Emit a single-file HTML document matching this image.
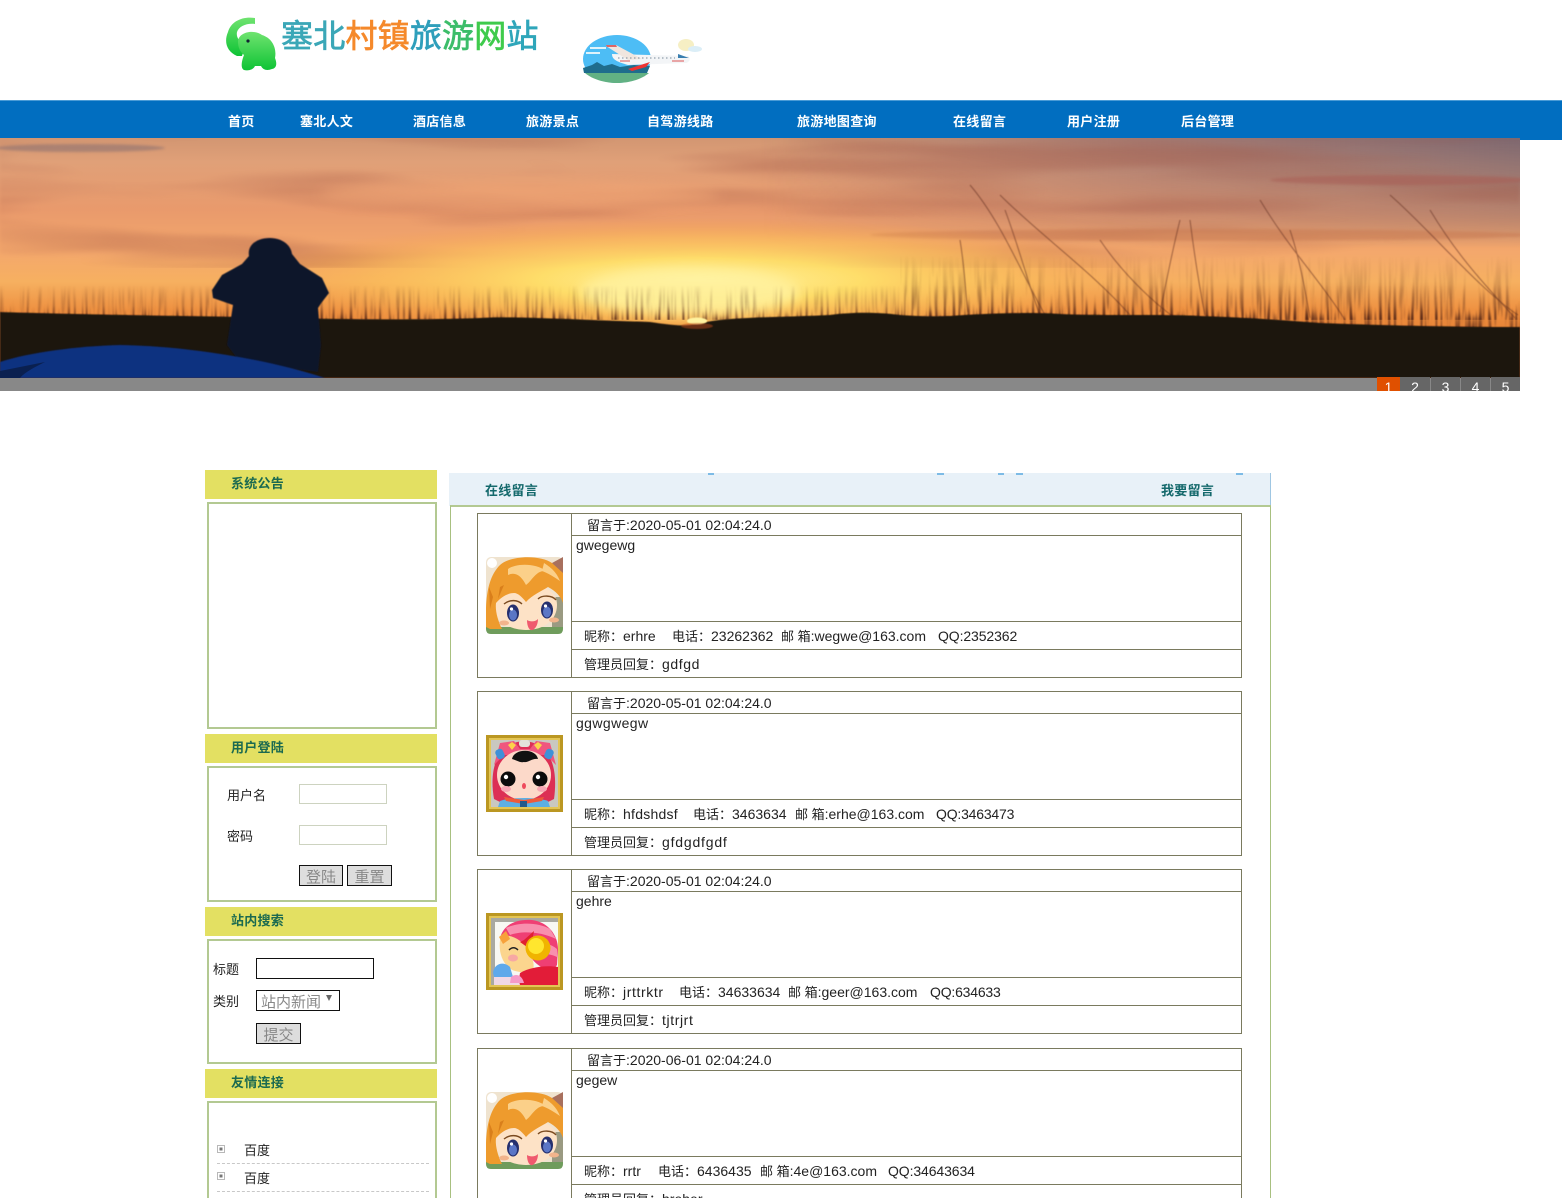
<!DOCTYPE html>
<html lang="zh"><head><meta charset="utf-8"><title>塞北村镇旅游网站</title>
<style>
html,body{margin:0;padding:0;background:#fff}
#p{position:relative;width:1562px;height:1198px;overflow:hidden;background:#fff;font-family:"Liberation Sans","Noto Sans CJK SC",sans-serif;font-size:14px;color:#222}
#p div,#p svg,#p span.t{position:absolute}
.t{line-height:20px;height:20px;white-space:nowrap}
.c{font-size:13px}
.n{color:#fff;font-size:13px;font-weight:bold;top:112px;letter-spacing:.3px}
.h{left:205px;width:232px;height:29px;background:#e3e062}
.ht{left:231px;font-size:13px;font-weight:bold;color:#1b6a50;letter-spacing:.25px}
.bx{left:207px;width:226px;border:2px solid #b3c992;background:#fff}
.in{box-sizing:border-box;background:#fff}
.btn{box-sizing:border-box;background:#ddd;border:1px solid #111;color:#888;font-size:15px;line-height:23px;text-align:center;height:21px;overflow:hidden}
.l{background:#7a7a5e}
.pg{top:377px;height:14px;background:#666;color:#fff;font-size:14px;line-height:21px;text-align:center;overflow:hidden}
.dot{top:473px;height:2px;background:#7dbbe6}
</style></head><body><div id="p">

<svg style="left:226px;top:16px" width="52" height="56" viewBox="226 16 52 56">
<defs><linearGradient id="eg" x1="0" y1="0" x2="0" y2="1"><stop offset="0" stop-color="#6fe36f"/><stop offset="1" stop-color="#0ec335"/></linearGradient></defs>
<path fill="url(#eg)" d="M255 18C243 16 231 21 228 32C224 41 226 51 237 56L242 56C244 50 244 47 243 44C239 41 236 37 237 32C239 26 247 23 255 24Z"/>
<path fill="url(#eg)" d="M238 42C238 32 254 29 262 35C272 38 277 48 275 58C277 63 277 68 272 69C267 71 263 70 261 66L255 66C253 70 248 71 244 70C240 68 242 60 244 55C240 52 238 47 238 42Z"/>
<circle cx="248" cy="41" r="1.6" fill="#123"/>
</svg>
<div class="t" style="left:281px;top:16px;height:40px;line-height:40px;font-size:32px;letter-spacing:.2px;-webkit-text-stroke:.7px currentColor"><span style="color:#3ba7b7">塞北</span><span style="color:#f5892b">村镇</span><span style="color:#2f9fbb">旅</span><span style="color:#3cbd6a">游</span><span style="color:#3fcb4c">网</span><span style="color:#2fa6ba">站</span></div>
<svg style="left:580px;top:34px" width="124" height="52" viewBox="580 34 124 52">
<ellipse cx="617" cy="59" rx="34" ry="24" fill="#4dbdf5"/>
<path d="M590 48H606M586 53H600" stroke="#dff3fb" stroke-width="2"/>
<path d="M583 68L592 65L597 62L604 66L612 64L620 67L634 65L650 66L647 73L584 73Z" fill="#1f6d8c"/>
<path d="M585 73H649C642 79 630 83 617 83C604 83 592 79 585 73Z" fill="#62b183"/>
<ellipse cx="686" cy="45" rx="8" ry="6" fill="#f6efc4"/><ellipse cx="695" cy="49" rx="7" ry="3" fill="#dbeef7"/>
<path d="M612 54L688 56C691 58 690 62 686 63L628 65C618 62 612 60 612 54Z" fill="#f3f5f7"/>
<path d="M606 46L616 45L642 59L628 60Z" fill="#f0e6df"/><path d="M606 45L616 45L617 47L607 47Z" fill="#d66"/>
<path d="M628 69L650 62L646 67L632 71Z" fill="#e33"/>
<path d="M678 54L689 58L678 58Z" fill="#3a7fb0"/>
<path d="M618 58H675" stroke="#7a8a9a" stroke-width="1" stroke-dasharray="1.5 2.5"/>
<path d="M620 61H630M672 61H684" stroke="#d55" stroke-width="1"/>
</svg>

<div style="left:0;top:100px;width:1562px;height:40px;background:#016ec0;border-top:1px solid #4a9bd6;box-sizing:border-box"></div>
<span class="t n" style="left:228px">首页</span>
<span class="t n" style="left:300px">塞北人文</span>
<span class="t n" style="left:413px">酒店信息</span>
<span class="t n" style="left:526px">旅游景点</span>
<span class="t n" style="left:647px">自驾游线路</span>
<span class="t n" style="left:797px">旅游地图查询</span>
<span class="t n" style="left:953px">在线留言</span>
<span class="t n" style="left:1067px">用户注册</span>
<span class="t n" style="left:1181px">后台管理</span>

<svg style="left:0;top:138px" width="1520" height="240" viewBox="0 138 1520 240">
<defs>
<linearGradient id="sky" x1="0" y1="0" x2="0" y2="1"><stop offset="0" stop-color="#d29672"/><stop offset=".1" stop-color="#e0a078"/><stop offset=".3" stop-color="#e99a6c"/><stop offset=".48" stop-color="#f4a86c"/><stop offset=".6" stop-color="#f6b060"/><stop offset=".72" stop-color="#ee9040"/><stop offset="1" stop-color="#d8641e"/></linearGradient>
<linearGradient id="mv" x1="0" y1="0" x2="1" y2="0"><stop offset="0" stop-color="#7a6478" stop-opacity="0"/><stop offset=".5" stop-color="#7f6270" stop-opacity=".55"/><stop offset="1" stop-color="#6f6070" stop-opacity=".85"/></linearGradient>
<linearGradient id="mvv" x1="0" y1="0" x2="0" y2="1"><stop offset="0" stop-color="#fff"/><stop offset=".55" stop-color="#fff" stop-opacity=".55"/><stop offset="1" stop-color="#000"/></linearGradient>
<mask id="mm"><rect x="0" y="138" width="1520" height="110" fill="url(#mvv)"/></mask>
<radialGradient id="sun"><stop offset="0" stop-color="#fff3a0"/><stop offset=".35" stop-color="#ffe06a" stop-opacity=".95"/><stop offset=".7" stop-color="#fcc058" stop-opacity=".55"/><stop offset="1" stop-color="#f7a04a" stop-opacity="0"/></radialGradient>
<linearGradient id="fa" x1="0" y1="0" x2="0" y2="1"><stop offset="0" stop-color="#000"/><stop offset=".6" stop-color="#555"/><stop offset="1" stop-color="#eee"/></linearGradient>
<mask id="gl"><rect x="0" y="285" width="1520" height="35" fill="url(#fa)"/></mask>
<mask id="gr"><rect x="900" y="255" width="620" height="75" fill="url(#fa)"/></mask>
<filter id="gf" x="0" y="0" width="100%" height="100%" color-interpolation-filters="sRGB"><feTurbulence type="fractalNoise" baseFrequency=".34 .016" numOctaves="2" seed="7"/><feColorMatrix values="0 0 0 0 .3  0 0 0 0 .13  0 0 0 0 .08  6 0 0 0 -3"/><feGaussianBlur stdDeviation=".7"/></filter>
<filter id="cl" x="0" y="0" width="100%" height="100%" color-interpolation-filters="sRGB"><feTurbulence type="fractalNoise" baseFrequency=".0025 .028" numOctaves="3" seed="4"/><feColorMatrix values="0 0 0 0 .62  0 0 0 0 .32  0 0 0 0 .26  3.5 0 0 0 -1.55"/><feGaussianBlur stdDeviation="1.5"/></filter>
<filter id="b6" x="-20%" y="-50%" width="140%" height="200%"><feGaussianBlur stdDeviation="6"/></filter>
<filter id="b2" x="-5%" y="-50%" width="110%" height="200%"><feGaussianBlur stdDeviation="1.2"/></filter>
<filter id="b1"><feGaussianBlur stdDeviation=".6"/></filter>
</defs>
<rect x="0" y="138" width="1520" height="240" fill="url(#sky)"/>
<rect x="760" y="138" width="760" height="110" fill="url(#mv)" mask="url(#mm)"/>
<rect x="0" y="138" width="1520" height="130" filter="url(#cl)" opacity=".33"/>
<ellipse cx="80" cy="148" rx="85" ry="4" fill="#806a70" opacity=".5" filter="url(#b2)"/>
<ellipse cx="520" cy="195" rx="200" ry="12" fill="#f6ab78" opacity=".55" filter="url(#b6)"/>
<ellipse cx="1400" cy="180" rx="130" ry="5" fill="#a85d55" opacity=".55" filter="url(#b2)"/>
<ellipse cx="1200" cy="235" rx="330" ry="6" fill="#c5744e" opacity=".45" filter="url(#b2)"/>
<ellipse cx="700" cy="280" rx="460" ry="62" fill="url(#sun)"/>
<ellipse cx="690" cy="292" rx="110" ry="24" fill="#fff2a0" opacity=".8" filter="url(#b6)"/>
<rect x="0" y="285" width="1520" height="35" filter="url(#gf)" mask="url(#gl)"/>
<rect x="900" y="255" width="620" height="75" filter="url(#gf)" mask="url(#gr)" opacity=".8"/>
<g fill="none" filter="url(#b1)" stroke="#5a2a1c" stroke-width="1" opacity=".55">
<path d="M970 185C1000 220 1020 270 1045 315"/><path d="M1000 195C1040 235 1090 270 1130 315"/><path d="M1005 210C1020 250 1030 290 1040 315"/><path d="M1180 220C1170 260 1165 290 1160 312"/><path d="M1190 220C1195 260 1200 290 1205 315"/><path d="M1260 200C1290 250 1320 280 1345 320"/><path d="M1390 195C1430 230 1480 290 1518 315"/><path d="M1430 210C1460 260 1490 290 1515 318"/><path d="M960 240C965 270 965 290 968 312"/><path d="M1290 230C1300 260 1305 290 1310 318"/><path d="M1100 240C1120 270 1150 300 1175 318"/>
</g>
<path fill="#1f1410" d="M0 312C60 314 180 316 250 317C350 320 420 320 480 318C510 316 560 319 650 322C670 325 680 326 690 325L712 321C740 317 790 317 830 315C850 312 880 312 900 315C930 317 940 316 950 316C990 313 1040 312 1060 314C1110 316 1170 314 1200 316C1260 318 1290 321 1320 323C1400 326 1470 327 1520 327V378H0Z" filter="url(#b1)"/>
<ellipse cx="697" cy="321" rx="10" ry="3.5" fill="#fff3a0" filter="url(#b1)"/>
<ellipse cx="697" cy="326" rx="16" ry="3" fill="#b8481a" opacity=".5" filter="url(#b1)"/>
<path fill="#10142a" filter="url(#b1)" d="M249 256C247 244 258 238 270 238C282 238 291 245 292 254L300 264L322 278L329 293L322 302L318 308L321 345L318 372L240 362L227 345L233 305L213 298L212 290L222 275L242 264Z"/>
<path fill="#0f3080" filter="url(#b1)" d="M0 362C30 352 80 346 120 345C190 346 270 360 325 378H0Z"/>
<path fill="#0a2050" d="M0 378V371L45 362C35 367 25 372 20 378Z"/>
</svg>
<div style="left:0;top:378px;width:1520px;height:13px;background:#888"></div>
<div class="pg" style="left:1377px;width:23px;background:#e05000">1</div>
<div class="pg" style="left:1400px;width:30px">2</div>
<div class="pg" style="left:1431px;width:29px">3</div>
<div class="pg" style="left:1461px;width:29px">4</div>
<div class="pg" style="left:1491px;width:29px">5</div>

<!-- left column -->
<div class="h" style="top:470px"></div><span class="t ht" style="top:474px">系统公告</span>
<div class="bx" style="top:502px;height:223px"></div>
<div class="h" style="top:734px"></div><span class="t ht" style="top:738px">用户登陆</span>
<div class="bx" style="top:766px;height:132px"></div>
<span class="t c" style="left:227px;top:786px">用户名</span>
<div class="in" style="left:299px;top:784px;width:88px;height:20px;border:1px solid #cdd3c0"></div>
<span class="t c" style="left:227px;top:827px">密码</span>
<div class="in" style="left:299px;top:825px;width:88px;height:20px;border:1px solid #cdd3c0"></div>
<div class="btn" style="left:299px;top:865px;width:44px">登陆</div>
<div class="btn" style="left:347px;top:865px;width:45px">重置</div>
<div class="h" style="top:907px"></div><span class="t ht" style="top:911px">站内搜索</span>
<div class="bx" style="top:939px;height:121px"></div>
<span class="t c" style="left:213px;top:960px">标题</span>
<div class="in" style="left:256px;top:958px;width:118px;height:21px;border:1px solid #111"></div>
<span class="t c" style="left:213px;top:992px">类别</span>
<div class="in" style="left:256px;top:990px;width:84px;height:21px;border:1px solid #111"></div>
<span class="t" style="left:261px;top:993px;font-size:15px;color:#888">站内新闻</span>
<svg style="left:325px;top:995px" width="9" height="8"><path d="M1 0H7L4 6Z" fill="#666"/></svg>
<div class="btn" style="left:256px;top:1023px;width:45px">提交</div>
<div class="h" style="top:1069px"></div><span class="t ht" style="top:1073px">友情连接</span>
<div class="bx" style="top:1101px;height:120px"></div>
<svg style="left:217px;top:1145px" width="9" height="36"><g fill="#fff" stroke="#b8b8b8"><rect x=".5" y=".5" width="7" height="7"/><rect x=".5" y="27.5" width="7" height="7"/></g><rect x="2.5" y="2.5" width="3" height="3" fill="#777"/><rect x="2.5" y="29.5" width="3" height="3" fill="#777"/></svg>
<span class="t c" style="left:244px;top:1141px">百度</span>
<div style="left:217px;top:1163px;width:212px;border-top:1px dashed #c8c8c8"></div>
<span class="t c" style="left:244px;top:1169px">百度</span>
<div style="left:217px;top:1191px;width:212px;border-top:1px dashed #c8c8c8"></div>

<!-- right column -->
<div style="left:449px;top:473px;width:822px;height:33px;background:#e8f1f8"></div>
<div class="dot" style="left:708px;width:6px"></div><div class="dot" style="left:937px;width:7px"></div><div class="dot" style="left:998px;width:6px"></div><div class="dot" style="left:1016px;width:7px"></div><div class="dot" style="left:1236px;width:7px"></div>
<div style="left:1270px;top:473px;width:1px;height:33px;background:#9fc6e2"></div>
<span class="t ht" style="left:485px;top:481px;color:#14696c">在线留言</span>
<span class="t ht" style="left:1161px;top:481px;color:#14696c">我要留言</span>
<div style="left:450px;top:505px;width:821px;height:720px;border:1px solid #a8c080;border-top:2px solid #b3c992;box-sizing:border-box"></div>

<svg width="0" height="0" style="left:0;top:0">
<defs>
<g id="girl">
<rect width="77" height="77" rx="5" fill="#efe3cf"/>
<rect x="66" y="40" width="11" height="30" fill="#9a9a82"/>
<path d="M0 70H77V72Q77 77 72 77H5Q0 77 0 72Z" fill="#6f9c5c"/>
<path d="M8 48C9 32 20 27 38 27C58 27 71 34 71 48C71 63 58 73 40 73C22 73 8 63 8 48Z" fill="#fde2c6"/>
<path d="M0 70C-1 40 2 20 14 8C25 -2 55 -2 66 6L77 12V46C75 40 70 34 62 30C56 34 46 38 40 45C36 40 32 36 28 36C22 36 15 40 10 46C9 54 12 64 16 72L4 72Z" fill="#ee9b2d"/>
<path d="M22 12C30 6 50 6 60 14C50 13 46 24 40 28C36 20 30 14 22 18Z" fill="#fbd089"/>
<path d="M58 6C64 10 70 14 74 24C68 20 62 16 56 14Z" fill="#fbd089"/>
<path d="M3 30L7 40L4 52Z" fill="#d97f1b"/><path d="M14 30L12 42L18 28Z" fill="#d97f1b"/>
<path d="M66 6L77 0V16Z" fill="#a8705e"/>
<circle cx="6" cy="6" r="5" fill="#fff"/>
<path d="M18 47C24 42 32 43 36 47M52 42C56 38 66 38 70 43" stroke="#7a4a20" stroke-width="1.4" fill="none"/>
<ellipse cx="27" cy="56" rx="6" ry="8.5" fill="#26306e"/><ellipse cx="27" cy="58" rx="4" ry="5.5" fill="#5b76c6"/><circle cx="25.5" cy="52" r="1.6" fill="#fff"/>
<ellipse cx="61" cy="53" rx="6" ry="8.5" fill="#26306e"/><ellipse cx="61" cy="55" rx="4" ry="5.5" fill="#5b76c6"/><circle cx="59.5" cy="49" r="1.6" fill="#fff"/>
<ellipse cx="18" cy="66" rx="5" ry="2.5" fill="#f2b48c"/><ellipse cx="68" cy="63" rx="5" ry="2.5" fill="#f2b48c"/>
<path d="M41 63C44 65 49 65 52 62C52 70 47 74 45 73C42 72 41 67 41 63Z" fill="#ef5a6e"/>
</g>
<g id="baby">
<rect width="77" height="77" fill="#bb9722"/><rect x="3" y="3" width="71" height="71" fill="#e3c554"/><rect x="5" y="5" width="67" height="67" fill="#c9c8c0"/>
<path d="M8 64C3 35 10 8 38 6C66 8 72 35 68 64L60 68H16Z" fill="#dc2f55"/>
<path d="M14 8L28 6L34 14H44L50 6L64 8L70 30L60 20H18L8 30Z" fill="#f0567e"/>
<path d="M22 10l4-3 4 3-4 5ZM48 10l4-3 4 3-4 5Z" fill="#fcd24a"/><rect x="33" y="5" width="11" height="7" rx="3" fill="#e3e3da"/>
<rect x="10" y="14" width="8" height="10" rx="3" fill="#3f90d8" transform="rotate(-25 14 19)"/><rect x="59" y="14" width="8" height="10" rx="3" fill="#3f90d8" transform="rotate(25 63 19)"/>
<ellipse cx="38" cy="40" rx="27" ry="25" fill="#fcd9c9"/>
<path d="M26 24C28 13 50 13 52 24C46 23 42 28 38 27C34 28 30 25 26 24Z" fill="#111"/>
<circle cx="22" cy="44" r="7.5" fill="#0b0b0b"/><circle cx="54" cy="44" r="7.5" fill="#0b0b0b"/><circle cx="20" cy="42" r="2.2" fill="#fff"/><circle cx="52" cy="42" r="2.2" fill="#fff"/>
<ellipse cx="20" cy="54" rx="5" ry="3" fill="#f7a8b4"/><ellipse cx="56" cy="54" rx="5" ry="3" fill="#f7a8b4"/><ellipse cx="38" cy="51" rx="2" ry="3" fill="#ee4a5c"/>
<path d="M14 66C24 62 52 62 62 66L64 72H12Z" fill="#5dafe3"/><path d="M18 62L38 65L58 62L56 66L38 69L20 66Z" fill="#ee5a3a"/><rect x="34" y="66" width="7" height="6" fill="#22598a"/>
</g>
<g id="helmet">
<rect width="77" height="77" fill="#bb9722"/><rect x="3" y="3" width="71" height="71" fill="#e3c554"/><rect x="5" y="5" width="67" height="67" fill="#f7f8f3"/><path d="M5 5H72V9H9V72H5Z" fill="#a9a9a0"/>
<path d="M15 22C20 10 32 6 46 7C62 9 72 22 72 36L71 52C66 60 54 56 46 46C36 32 26 24 15 22Z" fill="#ef3f74"/>
<path d="M20 15C32 9 52 9 64 16L70 26C54 18 34 18 24 22ZM44 30C52 28 64 30 71 36V44C62 40 52 40 46 42Z" fill="#f88fae"/>
<path d="M15 22C28 22 36 28 42 36C46 44 49 50 47 58C40 60 28 60 22 54C14 46 12 34 15 22Z" fill="#fbd58e"/>
<path d="M13 24L20 18L24 26L17 31Z" fill="#f7a13a"/>
<path d="M38 27L48 18L46 29L41 34L34 29Z" fill="#e02030"/>
<circle cx="52" cy="35" r="12.5" fill="#f0b400"/><circle cx="50" cy="33" r="8" fill="#ffe62e"/>
<path d="M23 37C26 34 29 34 32 37" stroke="#222" stroke-width="1.5" fill="none"/><ellipse cx="27" cy="45" rx="5" ry="3.5" fill="#f7a8a4"/>
<path d="M34 60C44 54 60 52 72 54V72H32Z" fill="#e21c38"/>
<path d="M7 60C8 50 18 48 24 54L27 64L8 64Z" fill="#5ea9ea"/><path d="M8 64H32L34 72H8Z" fill="#f0d8e4"/><path d="M25 64C30 60 36 62 38 70L24 70Z" fill="#f59ac8"/>
</g>
</defs></svg>

<!-- table 1 -->
<div style="left:477px;top:513px;width:763px;height:163px;border:1px solid #7a7a5e"></div>
<div class="l" style="left:571px;top:513px;width:1px;height:165px"></div>
<div class="l" style="left:571px;top:535px;width:670px;height:1px"></div>
<div class="l" style="left:571px;top:621px;width:670px;height:1px"></div>
<div class="l" style="left:571px;top:649px;width:670px;height:1px"></div>
<svg style="left:486px;top:557px" width="77" height="77" viewBox="0 0 77 77"><use href="#girl"/></svg>
<span class="t" style="left:587px;top:515px"><span class="c">留言于</span>:2020-05-01 02:04:24.0</span>
<span class="t" style="left:576px;top:535px">gwegewg</span>
<span class="t" style="left:584px;top:626px"><span class="c">昵称：</span>erhre</span>
<span class="t" style="left:672px;top:626px"><span class="c">电话：</span>23262362</span>
<span class="t" style="left:781px;top:626px"><span class="c">邮 箱</span>:wegwe@163.com</span>
<span class="t" style="left:938px;top:626px;letter-spacing:-.1px">QQ:2352362</span>
<span class="t" style="left:584px;top:654px"><span class="c">管理员回复：</span><span style="letter-spacing:.6px">gdfgd</span></span>

<!-- table 2 -->
<div style="left:477px;top:691px;width:763px;height:163px;border:1px solid #7a7a5e"></div>
<div class="l" style="left:571px;top:691px;width:1px;height:165px"></div>
<div class="l" style="left:571px;top:713px;width:670px;height:1px"></div>
<div class="l" style="left:571px;top:799px;width:670px;height:1px"></div>
<div class="l" style="left:571px;top:827px;width:670px;height:1px"></div>
<svg style="left:486px;top:735px" width="77" height="77" viewBox="0 0 77 77"><use href="#baby"/></svg>
<span class="t" style="left:587px;top:693px"><span class="c">留言于</span>:2020-05-01 02:04:24.0</span>
<span class="t" style="left:576px;top:713px;letter-spacing:.4px">ggwgwegw</span>
<span class="t" style="left:584px;top:804px"><span class="c">昵称：</span><span style="letter-spacing:.25px">hfdshdsf</span></span>
<span class="t" style="left:693px;top:804px"><span class="c">电话：</span>3463634</span>
<span class="t" style="left:795px;top:804px"><span class="c">邮 箱</span>:erhe@163.com</span>
<span class="t" style="left:936px;top:804px;letter-spacing:-.2px">QQ:3463473</span>
<span class="t" style="left:584px;top:832px"><span class="c">管理员回复：</span><span style="letter-spacing:.8px">gfdgdfgdf</span></span>

<!-- table 3 -->
<div style="left:477px;top:869px;width:763px;height:163px;border:1px solid #7a7a5e"></div>
<div class="l" style="left:571px;top:869px;width:1px;height:165px"></div>
<div class="l" style="left:571px;top:891px;width:670px;height:1px"></div>
<div class="l" style="left:571px;top:977px;width:670px;height:1px"></div>
<div class="l" style="left:571px;top:1005px;width:670px;height:1px"></div>
<svg style="left:486px;top:913px" width="77" height="77" viewBox="0 0 77 77"><use href="#helmet"/></svg>
<span class="t" style="left:587px;top:871px"><span class="c">留言于</span>:2020-05-01 02:04:24.0</span>
<span class="t" style="left:576px;top:891px">gehre</span>
<span class="t" style="left:584px;top:982px"><span class="c">昵称：</span><span style="letter-spacing:.6px">jrttrktr</span></span>
<span class="t" style="left:679px;top:982px"><span class="c">电话：</span>34633634</span>
<span class="t" style="left:788px;top:982px"><span class="c">邮 箱</span>:geer@163.com</span>
<span class="t" style="left:930px;top:982px;letter-spacing:-.2px">QQ:634633</span>
<span class="t" style="left:584px;top:1010px"><span class="c">管理员回复：</span><span style="letter-spacing:.6px">tjtrjrt</span></span>

<!-- table 4 -->
<div style="left:477px;top:1048px;width:763px;height:163px;border:1px solid #7a7a5e"></div>
<div class="l" style="left:571px;top:1048px;width:1px;height:165px"></div>
<div class="l" style="left:571px;top:1070px;width:670px;height:1px"></div>
<div class="l" style="left:571px;top:1156px;width:670px;height:1px"></div>
<div class="l" style="left:571px;top:1184px;width:670px;height:1px"></div>
<svg style="left:486px;top:1092px" width="77" height="77" viewBox="0 0 77 77"><use href="#girl"/></svg>
<span class="t" style="left:587px;top:1050px"><span class="c">留言于</span>:2020-06-01 02:04:24.0</span>
<span class="t" style="left:576px;top:1070px">gegew</span>
<span class="t" style="left:584px;top:1161px"><span class="c">昵称：</span>rrtr</span>
<span class="t" style="left:658px;top:1161px"><span class="c">电话：</span>6436435</span>
<span class="t" style="left:760px;top:1161px"><span class="c">邮 箱</span>:4e@163.com</span>
<span class="t" style="left:888px;top:1161px;letter-spacing:-.1px">QQ:34643634</span>
<span class="t" style="left:584px;top:1189px"><span class="c">管理员回复：</span>hreher</span>

</div></body></html>
